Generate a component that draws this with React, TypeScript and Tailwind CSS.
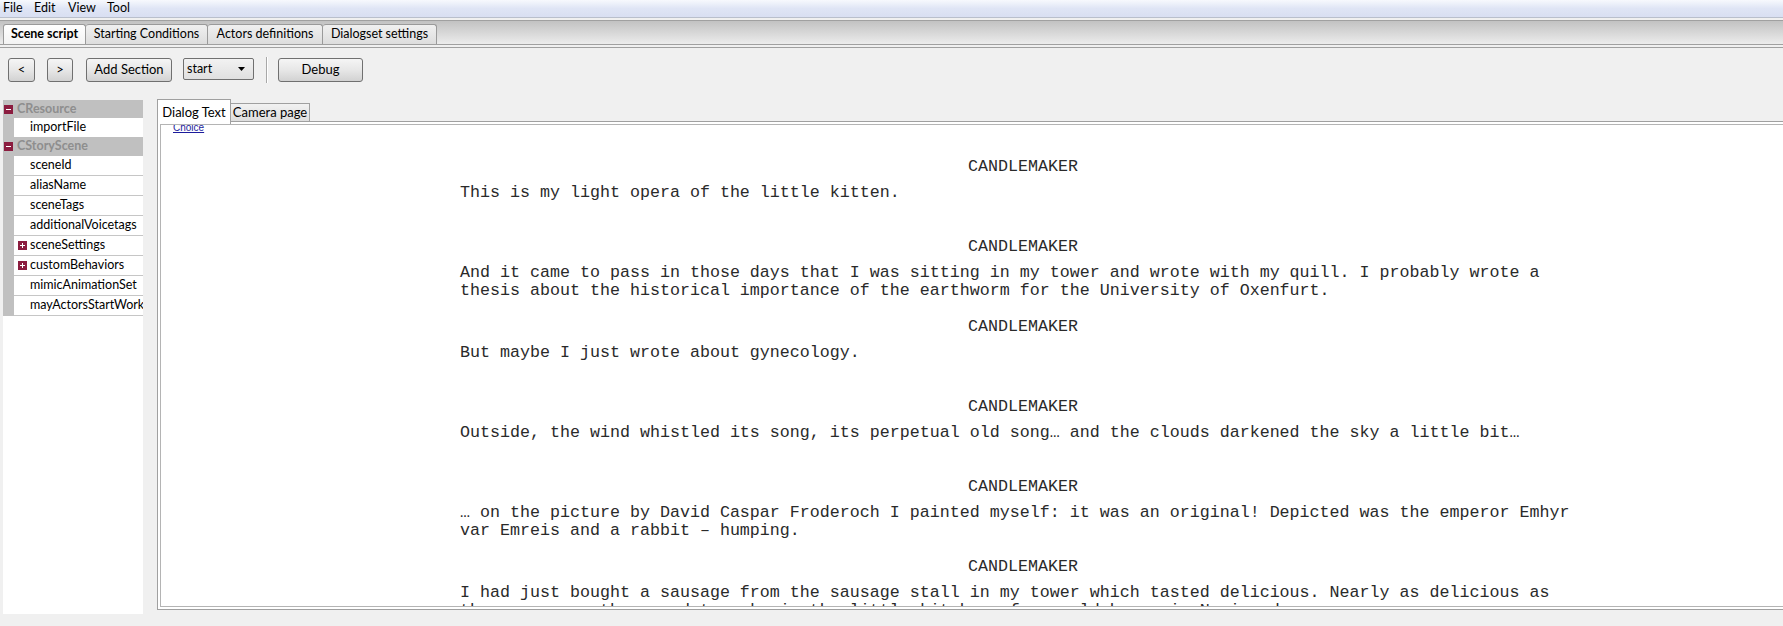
import React from "react";

// one dialog block per line of the scene
const script = [
  "This is my light opera of the little kitten.",
  "And it came to pass in those days that I was sitting in my tower and wrote with my quill. I probably wrote a thesis about the historical importance of the earthworm for the University of Oxenfurt.",
  "But maybe I just wrote about gynecology.",
  "Outside, the wind whistled its song, its perpetual old song… and the clouds darkened the sky a little bit…",
  "… on the picture by David Caspar Froderoch I painted myself: it was an original! Depicted was the emperor Emhyr var Emreis and a rabbit – humping.",
  "I had just bought a sausage from the sausage stall in my tower which tasted delicious. Nearly as delicious as the ones my mother used to make in the little kitchen of our old house in Novigrad.",
];

const props = [
  { name: "sceneId" },
  { name: "aliasName" },
  { name: "sceneTags" },
  { name: "additionalVoicetags" },
  { name: "sceneSettings", plus: true },
  { name: "customBehaviors", plus: true },
  { name: "mimicAnimationSet" },
  { name: "mayActorsStartWorki" },
];

function ToggleBox({ plus }: { plus?: boolean }) {
  return (
    <svg width="9" height="9" viewBox="0 0 9 9" className="shrink-0">
      <rect width="9" height="9" fill="#8b1c3f" />
      <rect x="2" y="4" width="5" height="1" fill="#fff" />
      {plus && <rect x="4" y="2" width="1" height="5" fill="#fff" />}
    </svg>
  );
}

function Btn({ label, w, ml }: { label: string; w: string; ml: string }) {
  return (
    <button
      className={`${w} ${ml} h-[24px] rounded-[3px] border border-[#707070] bg-linear-to-b from-[#f5f5f5] via-[#e7e7e7] to-[#d2d2d2] text-[13px] text-black flex items-center justify-center`}
    >
      {label}
    </button>
  );
}

function HeaderRow({ label, h }: { label: string; h: string }) {
  return (
    <div className={`${h} bg-[#c0c0c0] flex items-center pl-[1px]`}>
      <ToggleBox />
      <span className="ml-[4px] font-bold text-[#8e8e8e]">{label}</span>
    </div>
  );
}

export default function App() {
  return (
    <div className="h-[626px] w-full overflow-hidden bg-[#f0f0f0] flex flex-col font-['Lato','Noto_Sans',sans-serif] text-[12.5px] text-black">
      {/* menu */}
      <div className="h-[18px] shrink-0 bg-linear-to-b from-[#f7f9fd] via-[#dfe5f5] to-[#d9dff2] border-b border-[#b9bfcc] flex items-center pl-[3px]">
        <span className="w-[31px]">File</span>
        <span className="w-[34px]">Edit</span>
        <span className="w-[39px]">View</span>
        <span>Tool</span>
      </div>
      <div className="h-[2px] shrink-0" />

      {/* page tabs */}
      <div className="h-[25px] shrink-0 border-y border-[#a0a0a0] bg-linear-to-b from-[#c2c2c2] to-[#ececec] flex items-end pl-[3px]">
        <div className="w-[83px] h-[20px] rounded-t-[3px] border border-b-0 border-[#9a9a9a] bg-linear-to-b from-[#ffffff] to-[#f3f3f3] flex items-center justify-center font-bold">
          Scene script
        </div>
        <div className="w-[122px] h-[20px] rounded-t-[3px] border border-l-0 border-b-0 border-[#9a9a9a] bg-linear-to-b from-[#f0f0f0] to-[#dddddd] flex items-center justify-center">
          Starting Conditions
        </div>
        <div className="w-[115px] h-[20px] rounded-t-[3px] border border-l-0 border-b-0 border-[#9a9a9a] bg-linear-to-b from-[#f0f0f0] to-[#dddddd] flex items-center justify-center">
          Actors definitions
        </div>
        <div className="w-[114px] h-[20px] rounded-t-[3px] border border-l-0 border-b-0 border-[#9a9a9a] bg-linear-to-b from-[#f0f0f0] to-[#dddddd] flex items-center justify-center">
          Dialogset settings
        </div>
      </div>
      <div className="h-[3px] shrink-0 border-b border-[#a0a0a0]" />

      {/* toolbar */}
      <div className="h-[51px] shrink-0 flex items-start pt-[10px] pl-[8px]">
        <Btn label="<" w="w-[27px]" ml="" />
        <Btn label=">" w="w-[26px]" ml="ml-[12px]" />
        <Btn label="Add Section" w="w-[86px]" ml="ml-[13px]" />
        <div className="ml-[11px] w-[71px] h-[22px] rounded-[2px] border border-[#707070] bg-linear-to-b from-[#f2f2f2] to-[#e0e0e0] flex items-center justify-between pl-[3px] pr-[8px]">
          <span>start</span>
          <svg width="7" height="4" viewBox="0 0 7 4">
            <polygon points="0,0 7,0 3.5,4" fill="#000" />
          </svg>
        </div>
        <div className="ml-[12px] -mt-[1px] w-[2px] h-[26px] border-l border-[#a8a8a8] bg-white" />
        <Btn label="Debug" w="w-[85px]" ml="ml-[10px]" />
      </div>

      {/* main */}
      <div className="flex flex-1 min-h-0">
        {/* property panel */}
        <div className="ml-[3px] mt-[1px] w-[140px] h-[514px] bg-white flex flex-col shrink-0">
          <HeaderRow label="CResource" h="h-[18px]" />
          <div className="h-[19px] flex">
            <div className="w-[11px] bg-[#c0c0c0]" />
            <div className="flex-1 flex items-center pl-[16px]">importFile</div>
          </div>
          <HeaderRow label="CStoryScene" h="h-[19px]" />
          {props.map((p) => (
            <div key={p.name} className="h-[20px] flex">
              <div className="w-[11px] bg-[#c0c0c0]" />
              <div className="flex-1 flex items-center border-b border-[#c6c6c6] overflow-hidden whitespace-nowrap">
                {p.plus ? (
                  <>
                    <span className="ml-[4px]">
                      <ToggleBox plus />
                    </span>
                    <span className="ml-[3px]">{p.name}</span>
                  </>
                ) : (
                  <span className="pl-[16px]">{p.name}</span>
                )}
              </div>
            </div>
          ))}
        </div>

        {/* dialog tab widget */}
        <div className="ml-[14px] flex-1 flex flex-col -mr-[10px]">
          <div className="h-[22px] flex items-end">
            <div className="relative z-10 w-[74px] h-[25px] -mb-[3px] border border-b-0 border-[#a0a0a0] bg-white flex items-start justify-center pt-[3px] text-[13px]">
              Dialog Text
            </div>
            <div className="w-[79px] h-[18px] border border-l-0 border-b-0 border-[#a0a0a0] bg-linear-to-b from-[#f2f2f2] to-[#dedede] flex items-center justify-center text-[13px]">
              Camera page
            </div>
          </div>
          <div className="h-[489px] border border-[#a0a0a0] p-[2px] bg-white">
            <div className="h-full border border-[#b4b4b4] bg-white overflow-hidden">
              <div className="-mt-[2px] ml-[12px] h-[10px] leading-[10px] text-[10px] text-[#1c1c9c] underline font-['Liberation_Sans',sans-serif]">
                Choice
              </div>
              <div className="mt-[25px] ml-[299px] w-[1126px] font-['Liberation_Mono','Courier_New',monospace] text-[16.66px] leading-[18px] text-[#2a2a2a]">
                {script.map((line, i) => (
                  <div key={i} className="h-[80px]">
                    <div className="text-center">CANDLEMAKER</div>
                    <div className="mt-[8px]">{line}</div>
                  </div>
                ))}
              </div>
            </div>
          </div>
        </div>
      </div>
    </div>
  );
}
